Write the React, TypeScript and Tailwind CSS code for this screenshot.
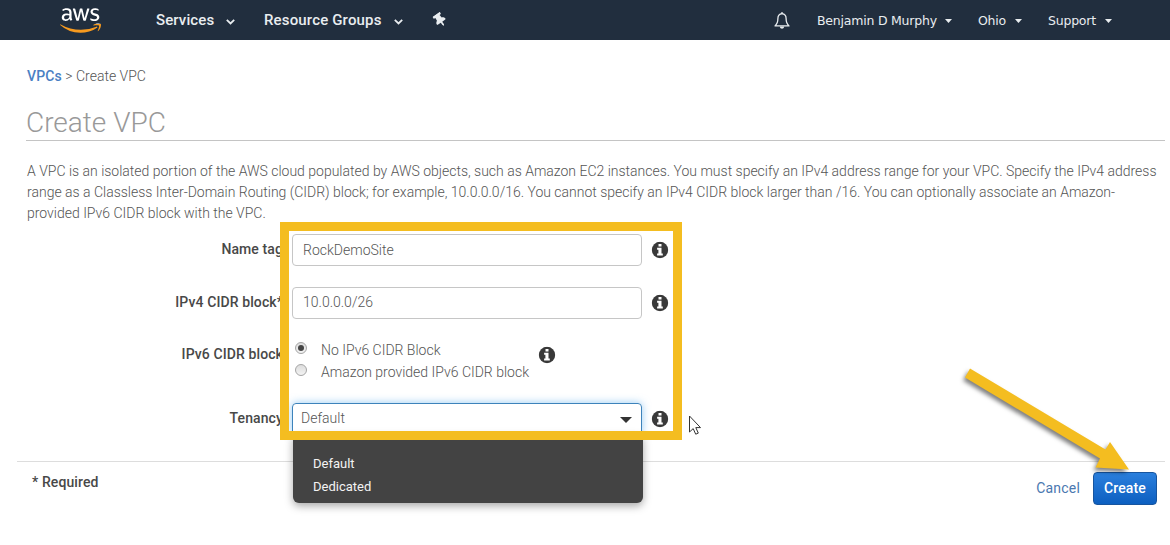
import { useState } from 'react';
import { FaAws, FaThumbtack } from 'react-icons/fa';

const DESCRIPTION = [
  'A VPC is an isolated portion of the AWS cloud populated by AWS objects, such as Amazon EC2 instances. You must specify an IPv4 address range for your VPC. Specify the IPv4 address',
  'range as a Classless Inter-Domain Routing (CIDR) block; for example, 10.0.0.0/16. You cannot specify an IPv4 CIDR block larger than /16. You can optionally associate an Amazon-',
  'provided IPv6 CIDR block with the VPC.',
];

function Chevron() {
  return (
    <svg width="9" height="6" viewBox="0 0 9 6" fill="none" stroke="currentColor" strokeWidth="1.8" className="mt-[3px]">
      <path d="M0.8 0.9 4.5 4.4 8.2 0.9" />
    </svg>
  );
}

function Caret() {
  return (
    <svg width="7" height="4" viewBox="0 0 7 4" fill="currentColor" className="mt-px">
      <path d="M0 0h7L3.5 4z" />
    </svg>
  );
}

function Bell() {
  return (
    <svg width="16" height="18" viewBox="0 0 16 18" fill="none" stroke="currentColor" strokeWidth="1.3">
      <path d="M8 1.6C5.2 1.9 3.9 4 3.9 6.6c0 4-.9 5.6-2.9 7.3h14c-2-1.7-2.9-3.3-2.9-7.3C12.1 4 10.8 1.9 8 1.6Z" strokeLinejoin="round" />
      <path d="M5.8 14.5c.4 2.9 4 2.9 4.4 0z" fill="currentColor" stroke="none" />
      <path d="M8 0v2" />
    </svg>
  );
}

function AwsLogo() {
  return (
    <div className="relative h-[33px] w-[41px]">
      <FaAws className="absolute inset-0 h-full w-full text-white [clip-path:inset(0_0_38%_0)]" />
      <FaAws className="absolute inset-0 h-full w-full text-[#f79a1f] [clip-path:inset(62%_0_0_0)]" />
    </div>
  );
}

function TopNav() {
  return (
    <header className="flex h-10 items-center bg-[#212e3e] text-[#e9edf0]">
      <div className="ml-[60px] w-24">
        <AwsLogo />
      </div>
      <button className="mt-px flex w-[108px] items-center gap-3 text-[15px] font-medium tracking-[0.1px]">
        Services <Chevron />
      </button>
      <button className="mt-px flex w-[169px] items-center gap-3 text-[15px] font-medium tracking-[0.16px]">
        Resource Groups <Chevron />
      </button>
      <FaThumbtack size={14} className="-rotate-[35deg]" />
      <div className="ml-auto mt-px flex items-center font-['DejaVu_Sans',sans-serif] text-[12.5px] tracking-[-0.22px]">
        <span className="w-[43px]"><Bell /></span>
        <button className="flex w-[161px] items-center gap-2">Benjamin D Murphy <Caret /></button>
        <button className="flex w-[70px] items-center gap-[9px]">Ohio <Caret /></button>
        <button className="flex w-[122px] items-center gap-[9px]">Support <Caret /></button>
      </div>
    </header>
  );
}

function Info() {
  return (
    <svg width="17" height="17" viewBox="0 0 17 17" className="shrink-0 -translate-x-[0.5px] -translate-y-[0.5px]">
      <circle cx="8.5" cy="8.5" r="8.2" fill="#393939" />
      <path d="M7 2.6h3v2.500H7zM5.6 6.3H10v5.700h1.300v1.900H5.600V12h1.300V8.200H5.600z" fill="#fff" />
    </svg>
  );
}

function Label({ children }: { children: string }) {
  return (
    <label className="w-[283px] shrink-0 -translate-y-px text-right font-medium tracking-[0.1px] text-[#484848]">
      {children}
    </label>
  );
}

function Radio({ checked, onChange }: { checked: boolean; onChange: () => void }) {
  return (
    <button
      type="button"
      onClick={onChange}
      className="-mt-1 flex h-3 w-3 items-center justify-center rounded-full border border-[#a5a5a5] bg-gradient-to-b from-[#ddd] to-[#f3f3f3]"
    >
      {checked && <span className="h-1.5 w-1.5 rounded-full bg-[#444]" />}
    </button>
  );
}

function Cursor() {
  return (
    <svg width="14" height="21" viewBox="0 0 14 21" className="absolute left-[688px] top-[191px]">
      <path d="M1.5 1v16l3.7-3.4 2.5 5.6 2.6-1.1-2.5-5.5h4.700z" fill="#fff" stroke="#333" strokeWidth="1" />
    </svg>
  );
}

// Points from the empty area above the footer to the Create button
function Arrow() {
  return (
    <svg width="180" height="120" viewBox="0 0 180 120" className="absolute -top-[106px] right-[24px] z-20 drop-shadow-[-2px_3px_2px_rgba(0,0,0,0.5)]">
      <path d="M9 12.5 4 21.5 139 102.500 134.500 111.500 168 113.500 149 86 144.500 93.500Z" fill="#f4bd20" />
    </svg>
  );
}

export default function App() {
  const [name, setName] = useState('RockDemoSite');
  const [cidr, setCidr] = useState('10.0.0.0/26');
  const [ipv6, setIpv6] = useState(false);
  const [tenancy, setTenancy] = useState('Default');

  return (
    <div className="h-[545px] w-[1170px] overflow-hidden bg-white font-[Roboto,sans-serif] text-sm text-[#555]">
      <TopNav />
      <main>
        <nav className="ml-[27px] mt-[26px] flex h-5 items-center gap-[3.5px] font-light">
          <a className="font-medium tracking-[0.1px] text-[#4a7fc4]">VPCs</a>
          <span>&gt;</span>
          <span>Create VPC</span>
        </nav>
        <h1 className="ml-[26px] mr-[5px] mt-4 h-[39px] border-b border-[#c4c4c4] text-[28px] font-light leading-[41px] text-[#999]">
          Create VPC
        </h1>
        <div className="ml-[27px] mt-5 h-[63px] whitespace-nowrap font-light leading-[21px] tracking-[-0.005px]">
          {DESCRIPTION.map((line) => <p key={line}>{line}</p>)}
        </div>

        <form className="relative h-[237px] pt-[10px]">
          <div className="flex h-8 items-center">
            <Label>Name tag</Label>
            <input
              value={name}
              onChange={(e) => setName(e.target.value)}
              className="ml-[9px] mr-[10px] h-8 w-[350px] rounded border border-[#c6c6c6] px-[10px] font-light outline-none"
            />
            <Info />
          </div>
          <div className="mt-[21px] flex h-8 items-center">
            <Label>IPv4 CIDR block*</Label>
            <input
              value={cidr}
              onChange={(e) => setCidr(e.target.value)}
              className="ml-[9px] mr-[10px] h-8 w-[350px] rounded border border-[#c6c6c6] px-[10px] pb-0.5 font-light outline-none"
            />
            <Info />
          </div>
          <div className="mt-5 flex h-11 items-start">
            <div className="mt-[6px] flex"><Label>IPv6 CIDR block</Label></div>
            <div className="ml-3 w-[244px] font-light">
              <div className="flex h-[22px] items-center gap-[14px]">
                <Radio checked={!ipv6} onChange={() => setIpv6(false)} /> No IPv6 CIDR Block
              </div>
              <div className="flex h-[22px] items-center gap-[14px]">
                <Radio checked={ipv6} onChange={() => setIpv6(true)} /> Amazon provided IPv6 CIDR block
              </div>
            </div>
            <div className="mt-[8px]"><Info /></div>
          </div>
          <div className="mt-5 flex h-8 items-center">
            <Label>Tenancy</Label>
            <div className="ml-[9px] mr-[10px] flex h-8 w-[350px] items-center justify-between rounded border border-[#3d83bb] pl-2 pr-[9px] font-light shadow-[0_0_8px_rgba(82,168,236,0.6)]">
              <span className="-mt-0.5">{tenancy}</span>
              <svg width="12" height="6" viewBox="0 0 12 6" className="mt-0.5"><path d="M0 0h12L6 6z" fill="#333" /></svg>
            </div>
            <Info />
          </div>

          <ul className="absolute left-[293px] top-[210px] z-10 h-[69px] w-[350px] rounded-md bg-[#434343] pl-5 pt-[18px] text-[13px] leading-[23px] text-[#f3f3f3] shadow-[0_3px_8px_rgba(0,0,0,0.35)]">
            {['Default', 'Dedicated'].map((option) => (
              <li key={option} onClick={() => setTenancy(option)}>{option}</li>
            ))}
          </ul>
          <div className="pointer-events-none absolute left-[280px] top-[-2px] z-20 h-[218px] w-[402px] border-[9px] border-[#f4bd20]" />
          <Cursor />
        </form>

        <footer className="relative ml-[17px] mr-[5px] flex justify-between border-t border-[#ddd] pl-[15px] pr-2 pt-[10px]">
          <span className="font-medium tracking-[0.1px] text-[#484848]">* Required</span>
          <div className="flex items-center gap-[13px]">
            <button className="-mt-px tracking-[0.2px] text-[#4a78b0]">Cancel</button>
            <button className="h-[33px] w-16 rounded border border-[#17559f] bg-gradient-to-b from-[#2a7fdd] to-[#0c5fc0] pb-0.5 font-medium tracking-[0.1px] text-white">
              Create
            </button>
          </div>
          <Arrow />
        </footer>
      </main>
    </div>
  );
}
